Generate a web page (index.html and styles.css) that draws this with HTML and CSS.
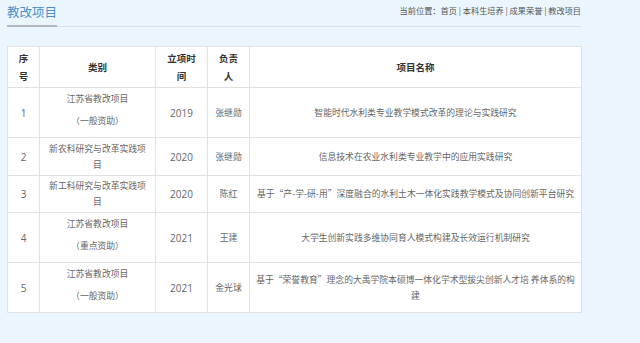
FILE: index.html
```html
<!DOCTYPE html>
<html lang="zh-CN">
<head>
<meta charset="utf-8">
<title>教改项目</title>
<link rel="stylesheet" href="styles.css">
</head>
<body>
<div class="page">
  <div class="head">
    <h1 class="title">教改项目</h1>
    <div class="crumb">当前位置：首页 | 本科生培养 | 成果荣誉 | 教改项目</div>
  </div>
  <table class="grid">
    <colgroup>
      <col class="c1"><col class="c2"><col class="c3"><col class="c4"><col class="c5">
    </colgroup>
    <thead>
      <tr class="rh">
        <th>序号</th>
        <th>类别</th>
        <th>立项时间</th>
        <th>负责人</th>
        <th>项目名称</th>
      </tr>
    </thead>
    <tbody>
      <tr class="tall">
        <td class="num">1</td>
        <td class="cat"><p>江苏省教改项目</p><p>（一般资助）</p></td>
        <td class="num">2019</td>
        <td>张继勋</td>
        <td>智能时代水利类专业教学模式改革的理论与实践研究</td>
      </tr>
      <tr class="short">
        <td class="num">2</td>
        <td>新农科研究与改革实践项目</td>
        <td class="num">2020</td>
        <td>张继勋</td>
        <td>信息技术在农业水利类专业教学中的应用实践研究</td>
      </tr>
      <tr class="short2">
        <td class="num">3</td>
        <td>新工科研究与改革实践项目</td>
        <td class="num">2020</td>
        <td>陈红</td>
        <td>基于“产-学-研-用”深度融合的水利土木一体化实践教学模式及协同创新平台研究</td>
      </tr>
      <tr class="tall">
        <td class="num">4</td>
        <td class="cat"><p>江苏省教改项目</p><p>（重点资助）</p></td>
        <td class="num">2021</td>
        <td>王建</td>
        <td>大学生创新实践多维协同育人模式构建及长效运行机制研究</td>
      </tr>
      <tr class="tall">
        <td class="num">5</td>
        <td class="cat"><p>江苏省教改项目</p><p>（一般资助）</p></td>
        <td class="num">2021</td>
        <td>金光球</td>
        <td>基于“荣誉教育”理念的大禹学院本硕博一体化学术型拔尖创新人才培 养体系的构建</td>
      </tr>
    </tbody>
  </table>
</div>
</body>
</html>
```
FILE: styles.css
```css
html, body {
  margin: 0;
  padding: 0;
  background: #eaf5fd;
}
body {
  font-family: "Noto Sans CJK SC", "Noto Sans", sans-serif;
  color: #666;
}
.page {
  width: 574px;
  padding: 0 0 0 7px;
}
.head {
  display: flex;
  justify-content: space-between;
  align-items: flex-start;
  border-bottom: 1px solid #d6e2ec;
  height: 26px;
}
.title {
  margin: 0;
  font-size: 12.5px;
  font-weight: normal;
  color: #4d8fc6;
  line-height: 20px;
  padding-top: 2px;
  height: 23px;
  border-bottom: 2px solid #b4b8bc;
  box-sizing: content-box;
}
.crumb {
  font-size: 8.2px;
  color: #555;
  line-height: 14px;
  padding-top: 3px;
}
.grid {
  margin-top: 19px;
  width: 574px;
  table-layout: fixed;
  border-collapse: collapse;
  background: #fff;
  font-size: 8.8px;
}
.c1 { width: 32px; }
.c2 { width: 116px; }
.c3 { width: 52px; }
.c4 { width: 42px; }
.c5 { width: 332px; }
.grid th, .grid td {
  border: 1px solid #e2e2e2;
  text-align: center;
  vertical-align: middle;
  padding: 0 6px;
  line-height: 16px;
}
.grid th {
  color: #333;
  font-weight: bold;
  font-size: 9.5px;
  line-height: 18px;
  padding: 0 8px;
}
.rh { height: 41px; }
.tall { height: 50px; }
.short { height: 38px; }
.short2 { height: 37px; }
.grid td.num {
  font-family: "Open Sans", "Noto Sans", sans-serif;
  font-size: 10px;
}
.cat p {
  margin: 0;
  line-height: 16px;
}
.cat {
  padding-bottom: 6px;
}
.grid td.cat {
  padding-bottom: 6px;
}
.cat p + p {
  margin-top: 6px;
}
```
